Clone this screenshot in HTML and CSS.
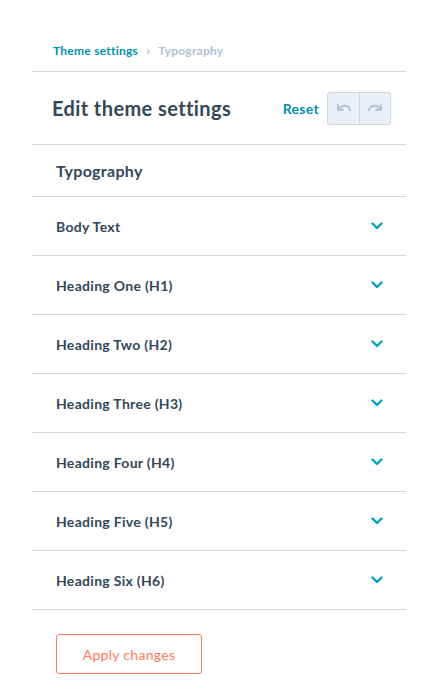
FILE: index.html
```html
<!DOCTYPE html>
<html lang="en">
<head>
    <meta charset="UTF-8">
    <meta name="viewport" content="width=device-width, initial-scale=1.0">
    <title>Edit theme settings</title>
    <link rel="stylesheet" href="styles.css">
</head>
<body>
    <div class="panel">
        <!-- Breadcrumb -->
        <nav class="breadcrumb">
            <a href="#" class="crumb-link">Theme settings</a>
            <span class="crumb-sep">&rsaquo;</span>
            <span class="crumb-current">Typography</span>
        </nav>

        <!-- Header -->
        <div class="header">
            <h1>Edit theme settings</h1>
            <div class="header-actions">
                <a href="#" class="reset">Reset</a>
                <div class="history">
                    <button class="history-btn" title="Undo">
                        <svg width="16" height="10" viewBox="0 0 16 10"><path d="M2 2v5h5M2.6 6.4C4.5 3.6 7 2.6 9.4 2.9c2.3.3 4 1.9 4.6 4.4" fill="none" stroke="#b6c5d6" stroke-width="2.2" stroke-linecap="round" stroke-linejoin="round"/></svg>
                    </button>
                    <button class="history-btn" title="Redo">
                        <svg width="16" height="10" viewBox="0 0 16 10"><path d="M14 2v5H9M13.4 6.4C11.5 3.6 9 2.6 6.6 2.9c-2.3.3-4 1.9-4.6 4.4" fill="none" stroke="#b6c5d6" stroke-width="2.2" stroke-linecap="round" stroke-linejoin="round"/></svg>
                    </button>
                </div>
            </div>
        </div>

        <div class="section-title">Typography</div>

        <!-- Accordion rows -->
        <ul class="settings-list">
            <li class="settings-row"><span>Body Text</span><svg class="chevron" width="12" height="8" viewBox="0 0 12 8"><path d="M1.5 1.5l4.5 4.5 4.5-4.5" fill="none" stroke="#00a4bd" stroke-width="2.4" stroke-linecap="round" stroke-linejoin="round"/></svg></li>
            <li class="settings-row"><span>Heading One (H1)</span><svg class="chevron" width="12" height="8" viewBox="0 0 12 8"><path d="M1.5 1.5l4.5 4.5 4.5-4.5" fill="none" stroke="#00a4bd" stroke-width="2.4" stroke-linecap="round" stroke-linejoin="round"/></svg></li>
            <li class="settings-row"><span>Heading Two (H2)</span><svg class="chevron" width="12" height="8" viewBox="0 0 12 8"><path d="M1.5 1.5l4.5 4.5 4.5-4.5" fill="none" stroke="#00a4bd" stroke-width="2.4" stroke-linecap="round" stroke-linejoin="round"/></svg></li>
            <li class="settings-row"><span>Heading Three (H3)</span><svg class="chevron" width="12" height="8" viewBox="0 0 12 8"><path d="M1.5 1.5l4.5 4.5 4.5-4.5" fill="none" stroke="#00a4bd" stroke-width="2.4" stroke-linecap="round" stroke-linejoin="round"/></svg></li>
            <li class="settings-row"><span>Heading Four (H4)</span><svg class="chevron" width="12" height="8" viewBox="0 0 12 8"><path d="M1.5 1.5l4.5 4.5 4.5-4.5" fill="none" stroke="#00a4bd" stroke-width="2.4" stroke-linecap="round" stroke-linejoin="round"/></svg></li>
            <li class="settings-row"><span>Heading Five (H5)</span><svg class="chevron" width="12" height="8" viewBox="0 0 12 8"><path d="M1.5 1.5l4.5 4.5 4.5-4.5" fill="none" stroke="#00a4bd" stroke-width="2.4" stroke-linecap="round" stroke-linejoin="round"/></svg></li>
            <li class="settings-row"><span>Heading Six (H6)</span><svg class="chevron" width="12" height="8" viewBox="0 0 12 8"><path d="M1.5 1.5l4.5 4.5 4.5-4.5" fill="none" stroke="#00a4bd" stroke-width="2.4" stroke-linecap="round" stroke-linejoin="round"/></svg></li>
        </ul>

        <div class="footer">
            <button class="apply-btn">Apply changes</button>
        </div>
    </div>
</body>
</html>
```

FILE: styles.css
```css
/* Page */
body {
    margin: 0;
    background: #fff;
    color: #33475b;
    font-family: Lato, "Noto Sans", sans-serif;
}

/* Panel column */
.panel {
    width: 374px;
    margin-left: 32px;
    padding-top: 40px;
}

/* Breadcrumb */
.breadcrumb {
    height: 32px;
    padding-left: 21px;
    padding-bottom: 11px;
    box-sizing: border-box;
    display: flex;
    align-items: center;
    gap: 8px;
    font-size: 12px;
    font-weight: 700;
    letter-spacing: 0.25px;
    border-bottom: 1px solid #cbd6e2;
}

.crumb-link {
    color: #0091ae;
    text-decoration: none;
}

.crumb-sep {
    color: #b0c1d4;
    font-size: 13px;
}

.crumb-current {
    color: #b0c1d4;
}

/* Header */
.header {
    height: 72px;
    display: flex;
    align-items: center;
    justify-content: space-between;
    padding-left: 20px;
    padding-right: 15px;
    border-bottom: 1px solid #cbd6e2;
}

h1 {
    margin: 0;
    font-size: 20px;
    font-weight: 700;
    letter-spacing: 0.4px;
    color: #33475b;
}

.header-actions {
    display: flex;
    align-items: center;
    gap: 8px;
}

.reset {
    color: #0091ae;
    font-size: 14px;
    font-weight: 700;
    letter-spacing: 0.3px;
    text-decoration: none;
}

.history {
    display: flex;
    border: 1px solid #cbd6e2;
    border-radius: 3px;
    background: #eaf0f6;
}

.history-btn {
    width: 31px;
    height: 31px;
    padding: 0;
    border: none;
    background: none;
    display: flex;
    align-items: center;
    justify-content: center;
}

.history-btn + .history-btn {
    border-left: 1px solid #cbd6e2;
}

/* Section */
.section-title {
    height: 51px;
    padding-left: 24px;
    display: flex;
    align-items: center;
    font-size: 16px;
    font-weight: 700;
    letter-spacing: 0.3px;
    border-bottom: 1px solid #cbd6e2;
}

.settings-list {
    list-style: none;
    margin: 0;
    padding: 0;
}

.settings-row {
    height: 58px;
    display: flex;
    align-items: center;
    justify-content: space-between;
    padding-left: 24px;
    padding-right: 23px;
    font-size: 14px;
    font-weight: 700;
    letter-spacing: 0.3px;
    border-bottom: 1px solid #cbd6e2;
}

/* Footer button */
.footer {
    padding: 24px 0 0 24px;
}

.apply-btn {
    width: 146px;
    height: 40px;
    font-family: inherit;
    font-size: 14px;
    letter-spacing: 0.3px;
    color: #ff7a59;
    background: #fff;
    border: 1px solid #ff7a59;
    border-radius: 3px;
}
```
